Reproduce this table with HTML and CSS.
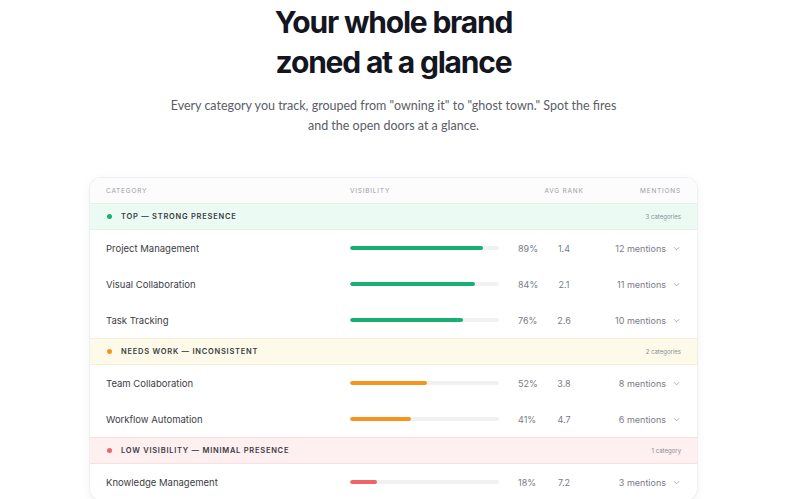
FILE: index.html
```html
<!DOCTYPE html>
<html>
<head>
<meta charset="utf-8">
<link rel="stylesheet" href="styles.css">
</head>
<body>
<main class="page">
<section class="hero">
  <h1 class="title">Your whole brand<br>zoned at a glance</h1>
  <p class="lead">Every category you track, grouped from "owning it" to "ghost town." Spot the fires<br>and the open doors at a glance.</p>
</section>
<div class="card">
  <div class="row head">
    <div>Category</div>
    <div>Visibility</div>
    <div class="c-rank">Avg rank</div>
    <div class="c-men">Mentions</div>
  </div>

  <div class="group g-top">
    <div class="g-label"><span class="dot"></span>Top — Strong presence</div>
    <div class="g-count">3 categories</div>
  </div>
  <div class="row item">
    <div class="name">Project Management</div>
    <div class="vis"><div class="track"><div class="fill green" style="width:89%"></div></div><span class="pct">89%</span></div>
    <div class="c-rank">1.4</div>
    <div class="c-men">12 mentions <svg class="chev" viewBox="0 0 8 5"><path d="M1 1l3 3 3-3"/></svg></div>
  </div>
  <div class="row item">
    <div class="name">Visual Collaboration</div>
    <div class="vis"><div class="track"><div class="fill green" style="width:84%"></div></div><span class="pct">84%</span></div>
    <div class="c-rank">2.1</div>
    <div class="c-men">11 mentions <svg class="chev" viewBox="0 0 8 5"><path d="M1 1l3 3 3-3"/></svg></div>
  </div>
  <div class="row item">
    <div class="name">Task Tracking</div>
    <div class="vis"><div class="track"><div class="fill green" style="width:76%"></div></div><span class="pct">76%</span></div>
    <div class="c-rank">2.6</div>
    <div class="c-men">10 mentions <svg class="chev" viewBox="0 0 8 5"><path d="M1 1l3 3 3-3"/></svg></div>
  </div>

  <div class="group g-mid">
    <div class="g-label"><span class="dot"></span>Needs work — Inconsistent</div>
    <div class="g-count">2 categories</div>
  </div>
  <div class="row item">
    <div class="name">Team Collaboration</div>
    <div class="vis"><div class="track"><div class="fill orange" style="width:52%"></div></div><span class="pct">52%</span></div>
    <div class="c-rank">3.8</div>
    <div class="c-men">8 mentions <svg class="chev" viewBox="0 0 8 5"><path d="M1 1l3 3 3-3"/></svg></div>
  </div>
  <div class="row item">
    <div class="name">Workflow Automation</div>
    <div class="vis"><div class="track"><div class="fill orange" style="width:41%"></div></div><span class="pct">41%</span></div>
    <div class="c-rank">4.7</div>
    <div class="c-men">6 mentions <svg class="chev" viewBox="0 0 8 5"><path d="M1 1l3 3 3-3"/></svg></div>
  </div>

  <div class="group g-low">
    <div class="g-label"><span class="dot"></span>Low visibility — Minimal presence</div>
    <div class="g-count">1 category</div>
  </div>
  <div class="row item">
    <div class="name">Knowledge Management</div>
    <div class="vis"><div class="track"><div class="fill red" style="width:18%"></div></div><span class="pct">18%</span></div>
    <div class="c-rank">7.2</div>
    <div class="c-men">3 mentions <svg class="chev" viewBox="0 0 8 5"><path d="M1 1l3 3 3-3"/></svg></div>
  </div>
</div>
</main>
</body>
</html>
```
FILE: styles.css
```css
html, body {
  margin: 0;
  padding: 0;
  background: #ffffff;
  font-family: Inter, "Noto Sans", sans-serif;
  color: #222;
}
.page {
  width: 787px;
}
.hero {
  text-align: center;
  padding-top: 2px;
}
.title {
  margin: 0;
  font-size: 30px;
  line-height: 40px;
  font-weight: 700;
  letter-spacing: -0.04em;
  color: #14161f;
}
.lead {
  margin: 14px 0 0;
  font-family: Lato, Inter, sans-serif;
  font-size: 12.5px;
  line-height: 20px;
  color: #5a5d66;
}
.card {
  width: 607px;
  margin: 41px auto 0;
  border: 1px solid #eeeff2;
  border-radius: 12px;
  overflow: hidden;
  box-shadow: 0 2px 10px rgba(20, 25, 40, 0.05);
  background: #fff;
}
.row {
  display: grid;
  grid-template-columns: 244px 190px 48px 1fr;
  align-items: center;
  padding: 0 16px;
}
.head {
  height: 25px;
  background: #fcfcfd;
  font-size: 6.5px;
  letter-spacing: 0.12em;
  text-transform: uppercase;
  color: #9a9ca4;
}
.c-rank { text-align: center; }
.c-men {
  text-align: right;
  display: flex;
  justify-content: flex-end;
  align-items: center;
}
.group {
  height: 27px;
  box-sizing: border-box;
  display: flex;
  align-items: center;
  justify-content: space-between;
  padding: 0 16px;
  border-top: 1px solid transparent;
  border-bottom: 1px solid transparent;
}
.g-label {
  display: flex;
  align-items: center;
  font-size: 7.5px;
  font-weight: 600;
  letter-spacing: 0.1em;
  text-transform: uppercase;
  color: #3a3c42;
}
.dot {
  width: 5px;
  height: 5px;
  border-radius: 50%;
  margin-right: 9px;
  margin-left: 1px;
}
.g-count {
  font-size: 6px;
  color: #8a8c94;
}
.g-top { background: #ebfbf3; border-color: #dcf5e8; }
.g-top .dot { background: #17b072; }
.g-mid { background: #fefaea; border-color: #f8f0d4; }
.g-mid .dot { background: #f7941d; }
.g-low { background: #feeff0; border-color: #fadfe1; }
.g-low .dot { background: #f06368; }
.item {
  height: 36px;
  font-size: 9px;
  color: #7a7c84;
}
.name {
  font-size: 9.5px;
  color: #3b3d44;
}
.vis {
  display: flex;
  align-items: center;
}
.track {
  width: 149px;
  height: 4px;
  border-radius: 2px;
  background: #f0f1f3;
  overflow: hidden;
}
.fill {
  height: 100%;
  border-radius: 2px;
}
.green { background: #17b072; }
.orange { background: #f7941d; }
.red { background: #f06368; }
.pct {
  margin-left: 19px;
}
.chev {
  width: 7px;
  height: 5px;
  margin-left: 7px;
  margin-right: 1px;
  fill: none;
  stroke: #9a9ca4;
  stroke-width: 0.9;
}
```
